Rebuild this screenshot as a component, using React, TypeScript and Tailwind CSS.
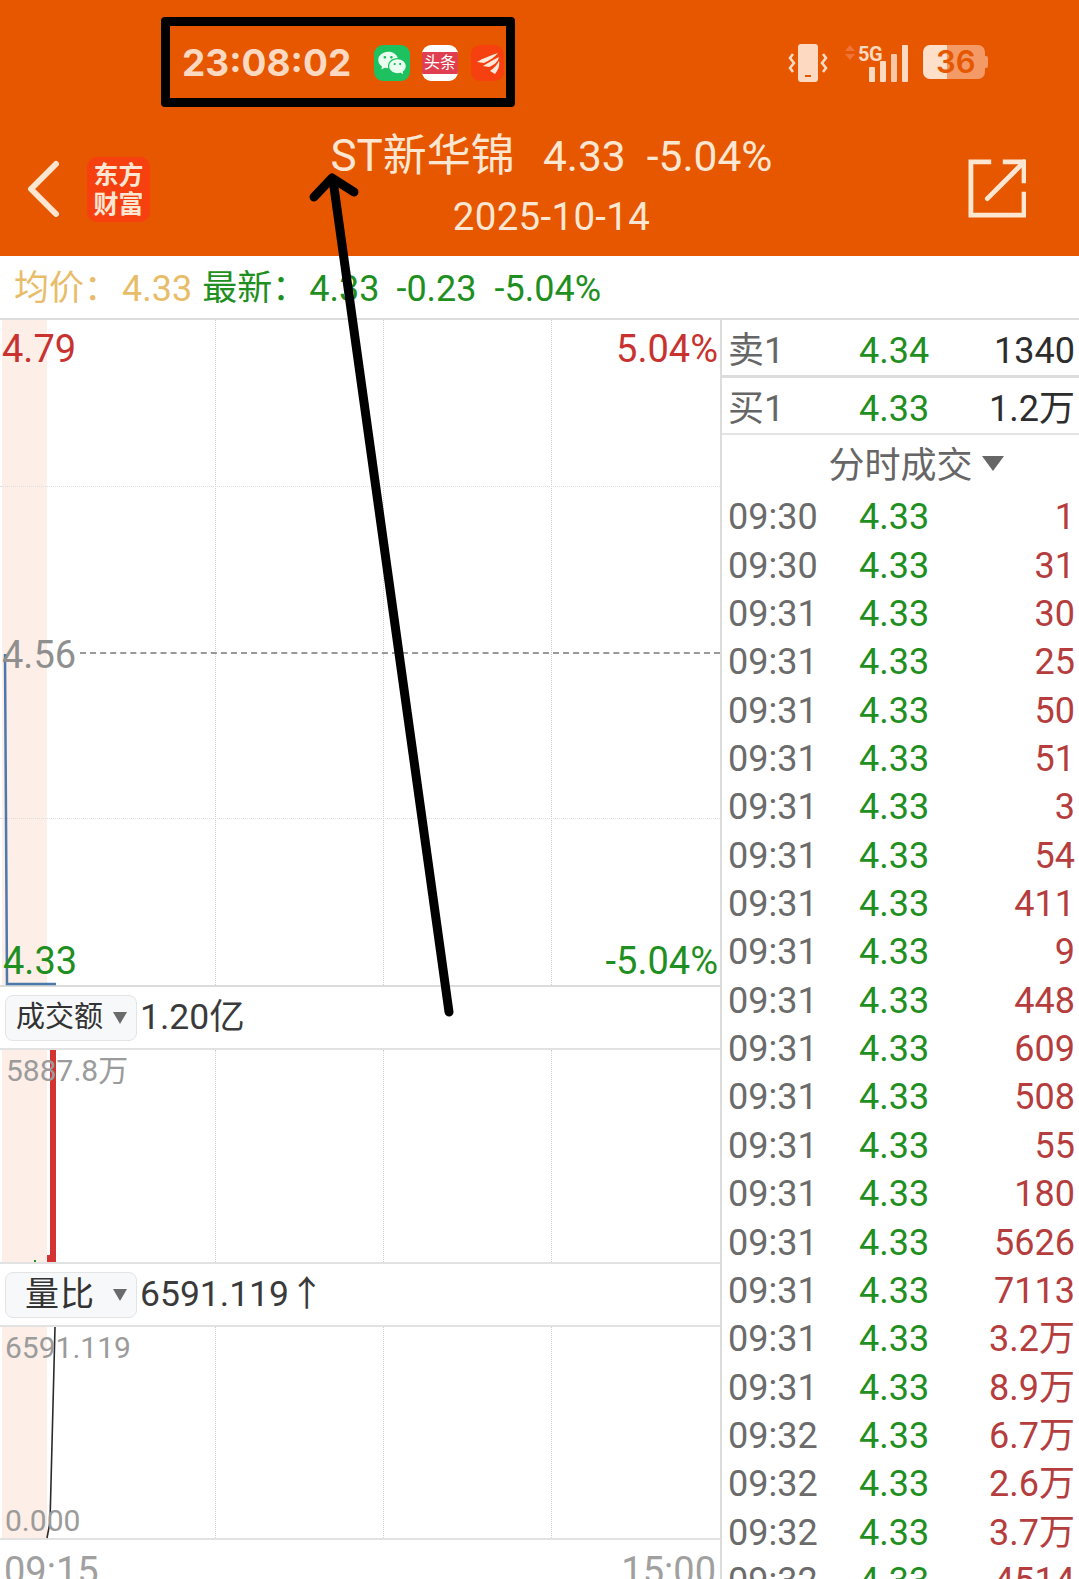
import React from "react";
import { RiWechatFill } from "react-icons/ri";

const font = { fontFamily: '"Roboto","Noto Sans CJK SC",sans-serif' };

const rows: [string, string][] = [
  ["09:30", "1"], ["09:30", "31"], ["09:31", "30"], ["09:31", "25"], ["09:31", "50"], ["09:31", "51"],
  ["09:31", "3"], ["09:31", "54"], ["09:31", "411"], ["09:31", "9"], ["09:31", "448"], ["09:31", "609"],
  ["09:31", "508"], ["09:31", "55"], ["09:31", "180"], ["09:31", "5626"], ["09:31", "7113"], ["09:31", "3.2万"],
  ["09:31", "8.9万"], ["09:32", "6.7万"], ["09:32", "2.6万"], ["09:32", "3.7万"], ["09:32", "4514"],
];

function Grid() {
  return (
    <div className="absolute inset-0 flex pl-[2px]">
      <div className="w-[45px] bg-[#fdeee7]" />
      <div className="w-[169px] border-r border-dotted border-[#cfcfcf]" />
      <div className="w-[168px] border-r border-dotted border-[#cfcfcf]" />
      <div className="w-[168px] border-r border-dotted border-[#cfcfcf]" />
    </div>
  );
}

function Selector({ label, value, wide }: { label: string; value: string; wide?: boolean }) {
  return (
    <div className="h-[61px] flex items-center pl-[5px]">
      <div className={`w-[132px] h-[46px] rounded-[8px] border border-[#e2e4e6] bg-[#f7f8f9] flex items-center text-[#333] ${wide ? "pl-[10px] gap-[9px]" : "pl-[19px] gap-[17px]"}`}>
        <span className={wide ? "text-[29px]" : "text-[34px] tracking-[1px]"}>{label}</span>
        <svg width="16" height="14" viewBox="0 0 16 14"><path d="M1 1h14L8 13z" fill="#6b6b6b" /></svg>
      </div>
      <span className="ml-[3px] text-[35.5px] leading-none text-[#3a3a3a]">{value}</span>
    </div>
  );
}

export default function App() {
  return (
    <div style={font} className="relative w-[1079px] h-[1579px] overflow-hidden bg-white">
      <header className="h-[256px] bg-[#e65700] relative text-[#fde6d2]">
        <div className="h-[128px] flex items-center justify-between pl-[182px] pr-[90px] pb-[3px]">
          <div className="flex items-center">
            <span className="text-[37px] font-bold leading-none text-[#fcd9c0] w-[191px]" style={{ fontFamily: "Inter, sans-serif" }}>23:08:02</span>
            <div className="w-[36px] h-[36px] rounded-[9px] bg-[#1ec15f] flex items-center justify-center ml-[1px]">
              <RiWechatFill className="text-[#e9fff0] text-[30px]" />
            </div>
            <div className="w-[36px] h-[36px] rounded-[9px] bg-white ml-[12px] flex items-center justify-center overflow-hidden">
              <div className="w-full h-[22px] bg-[#df3f50] text-white text-[16px] leading-[22px] text-center whitespace-nowrap">头条</div>
            </div>
            <div className="w-[33px] h-[36px] rounded-[9px] bg-[#f6400f] ml-[13px] flex items-center justify-center">
              <svg width="26" height="26" viewBox="0 0 26 26"><path d="M2 12C8 8 15 6 23 3 20 7 15 10 9 13ZM8 16C13 13 18 10 24 7 23 12 19 15 14 17ZM15 21C19 18 22 15 24 11 25 16 23 20 20 24Z" fill="#fdeadd" /></svg>
            </div>
          </div>
          <div className="flex items-center gap-[12px]">
            <svg width="40" height="38" viewBox="0 0 40 38">
              <rect x="10" y="0" width="20" height="38" rx="3" fill="#fcd9c0" />
              <rect x="17" y="31" width="6" height="2" fill="#e65700" />
              <path d="M5 10l-3 4 4 5-4 5 3 4M35 10l3 4-4 5 4 5-3 4" stroke="#fcd9c0" strokeWidth="2.6" fill="none" />
            </svg>
            <div className="relative w-[64px] h-[38px] ml-[4px]">
              <svg className="absolute inset-0" width="64" height="38" viewBox="0 0 64 38">
                <path d="M1 7l5-6 5 6zM1 10h10l-5 6z" fill="#f0733a" />
                <rect x="25" y="23" width="6" height="15" rx="1" fill="#fcd9c0" />
                <rect x="36" y="17" width="6" height="21" rx="1" fill="#fcd9c0" />
                <rect x="47" y="10" width="6" height="28" rx="1" fill="#f9c7a8" />
                <rect x="58" y="1" width="6" height="37" rx="1" fill="#fcd9c0" />
              </svg>
              <span className="absolute left-[14px] top-[-2px] text-[20px] font-bold leading-[24px] text-[#fcd9c0] tracking-[-0.5px]">5G</span>
            </div>
            <div className="relative w-[66px] h-[36px] ml-[3px] flex">
              <div className="w-[24px] h-[34px] rounded-l-[7px] bg-[#fddfca]" />
              <div className="w-[38px] h-[34px] rounded-r-[7px] bg-[#f39a66]" />
              <div className="w-[3px] h-[12px] self-center mb-[2px] rounded-r-[2px] bg-[#f39a66]" />
              <span className="absolute left-[13px] top-[-1px] text-[31px] font-semibold leading-[36px] text-[#e65700]" style={{ fontFamily: "Inter, sans-serif" }}>36</span>
            </div>
          </div>
        </div>
        <div className="absolute left-[25px] top-[160px] flex items-center">
          <svg width="36" height="58" viewBox="0 0 36 58"><path d="M31 4L6 29l25 25" stroke="#fde6d2" strokeWidth="6" fill="none" strokeLinecap="round" strokeLinejoin="round" /></svg>
        </div>
        <div className="absolute left-[87px] top-[157px] w-[63px] h-[65px] rounded-[10px] bg-[#f6400f] text-[#fde6d2] text-[25px] font-bold leading-[29px] text-center pt-[4px]">东方<br />财富</div>
        <div className="text-center pl-[24px]">
          <div className="flex justify-center items-baseline leading-[50px] mt-[3px] text-[42.5px]">
            <span className="text-[44px]">ST新华锦</span>
            <span className="ml-[28px]">4.33</span>
            <span className="ml-[21px]">-5.04%</span>
          </div>
          <div className="text-[38.5px] leading-[44px] mt-[13px] tracking-[0.3px]">2025-10-14</div>
        </div>
        <div className="absolute left-[968px] top-[158px]">
          <svg width="58" height="60" viewBox="0 0 60 60" fill="none" stroke="#fde6d2" strokeWidth="5">
            <path d="M24 3H3v55h55V34" />
            <path d="M36 3h22v22" />
            <path d="M58 3L20 41" strokeLinecap="round" />
          </svg>
        </div>
      </header>

      <div className="h-[59px] flex items-center pl-[14px] pt-[3px] text-[36px] leading-none border-b-2 border-[#dcdcdc] box-content whitespace-pre">
        <span className="text-[#e8bd6a] text-[35px]">均价：</span>
        <span className="text-[#e8bd6a] ml-[3px]">4.33</span>
        <span className="text-[#1f8f22] text-[35px] ml-[10px]">最新：</span>
        <span className="text-[#1f8f22] ml-[2px]">4.33</span>
        <span className="text-[#1f8f22] ml-[17px]">-0.23</span>
        <span className="text-[#1f8f22] ml-[18px]">-5.04%</span>
      </div>

      <div className="flex">
        <div className="w-[722px] shrink-0 border-r-2 border-[#dcdcdc]">
          <div className="relative h-[667px] border-b-2 border-[#dcdcdc]">
            <Grid />
            <div className="absolute inset-x-0 top-[166px] border-t border-dotted border-[#dddddd]" />
            <div className="absolute inset-x-0 top-[498px] border-t border-dotted border-[#dddddd]" />
            <div className="absolute left-[80px] right-[0px] top-[332px] border-t-2 border-dashed border-[#999]" />
            <svg className="absolute left-0 top-0" width="60" height="668" viewBox="0 0 60 668">
              <path d="M5 334L7 664H56" stroke="#4b78ad" strokeWidth="2.5" fill="none" />
            </svg>
            <span className="absolute left-[2px] top-[7px] text-[38px] leading-[44px] text-[#c8322f]">4.79</span>
            <span className="absolute right-[2px] top-[7px] text-[38px] leading-[44px] text-[#c8322f]">5.04%</span>
            <span className="absolute left-[2px] top-[313px] text-[38px] leading-[44px] text-[#8f8f8f]">4.56</span>
            <span className="absolute left-[3px] top-[619px] text-[38px] leading-[44px] text-[#1f8f22]">4.33</span>
            <span className="absolute right-[2px] top-[619px] text-[38px] leading-[44px] text-[#1f8f22]">-5.04%</span>
          </div>

          <Selector label="成交额" value="1.20亿" wide />

          <div className="relative h-[216px] border-y-2 border-[#e2e2e2]">
            <Grid />
            <div className="absolute left-[50px] top-0 bottom-0 w-[6px] bg-[#d33333]" />
            <div className="absolute left-[47px] bottom-0 h-[7px] w-[9px] bg-[#d33333]" />
            <div className="absolute left-[34px] bottom-0 w-[2px] h-[2px] bg-[#1f8f22]" />
            <span className="absolute left-[6px] top-[3px] text-[30px] leading-[36px] text-[#9b9b9b]">5887.8万</span>
          </div>

          <Selector label="量比" value="6591.119↑" />

          <div className="relative h-[215px] border-y-2 border-[#e2e2e2]">
            <Grid />
            <svg className="absolute left-0 top-0" width="80" height="212" viewBox="0 0 80 212">
              <path d="M47 211L50 195L55 0" stroke="#2b2b2b" strokeWidth="1.6" fill="none" />
            </svg>
            <span className="absolute left-[5px] top-[3px] text-[30px] leading-[36px] text-[#9b9b9b]">6591.119</span>
            <span className="absolute left-[5px] bottom-[-1px] text-[30px] leading-[36px] text-[#9b9b9b]">0.000</span>
          </div>

          <div className="flex justify-between px-[4px] text-[38px] leading-[44px] text-[#a0a0a0] pt-[9px]">
            <span>09:15</span>
            <span>15:00</span>
          </div>
        </div>

        <div className="flex-1 min-w-0">
          <div className="h-[58px] flex items-center pl-[6px] pr-[4px] pt-[6px] border-b-[3px] border-[#dcdcdc] text-[36px] leading-none">
            <span className="w-[131px] text-[#666]">卖1</span>
            <span className="text-[#1f8f22]">4.34</span>
            <span className="ml-auto text-[#2d2d2d]">1340</span>
          </div>
          <div className="h-[57px] flex items-center pl-[6px] pr-[4px] pt-[7px] border-b-2 border-[#e4e4e4] text-[36px] leading-none">
            <span className="w-[131px] text-[#666]">买1</span>
            <span className="text-[#1f8f22]">4.33</span>
            <span className="ml-auto text-[#2d2d2d]">1.2万</span>
          </div>
          <div className="h-[58px] flex items-center justify-center gap-[9px] text-[36px] leading-none text-[#666] pt-[4px] pl-[31px]">
            <span>分时成交</span>
            <svg className="mb-[6px]" width="22" height="15" viewBox="0 0 22 15"><path d="M0 0h22L11 15z" fill="#666" /></svg>
          </div>
          {rows.map(([t, v], i) => (
            <div key={i} className="h-[48.36px] flex items-center pl-[6px] pr-[4px] text-[36px] leading-none">
              <span className="w-[131px] text-[#6b6b6b]">{t}</span>
              <span className="text-[#1f8f22]">4.33</span>
              <span className="ml-auto text-[#b53d3d]">{v}</span>
            </div>
          ))}
        </div>
      </div>

      <div className="absolute left-[161px] top-[17px] w-[354px] h-[90px] border-[9px] border-black rounded-[4px]" />
      <svg className="absolute left-0 top-0 pointer-events-none" width="1079" height="1579" viewBox="0 0 1079 1579">
        <path d="M449 1012L333 180" stroke="#000" strokeWidth="9" strokeLinecap="round" fill="none" />
        <path d="M314 197L332 178L354 192" stroke="#000" strokeWidth="9" strokeLinecap="round" strokeLinejoin="round" fill="none" />
      </svg>
    </div>
  );
}
